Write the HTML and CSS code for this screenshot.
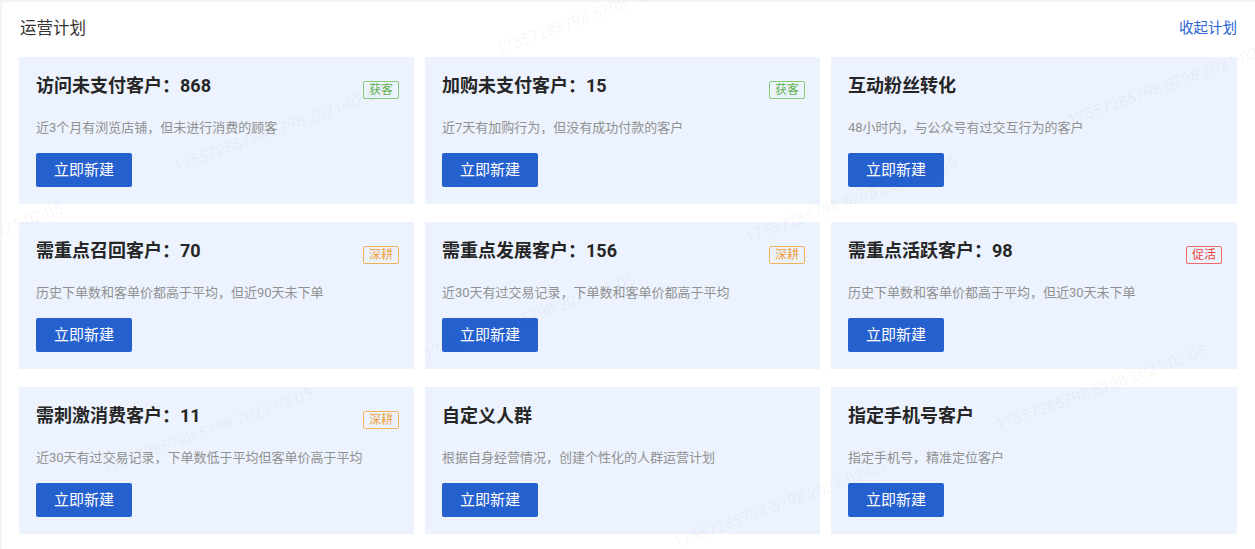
FILE: index.html
```html
<!DOCTYPE html>
<html lang="zh-CN">
<head>
    <meta charset="UTF-8">
    <meta name="viewport" content="width=device-width, initial-scale=1.0">
    <title>运营计划</title>
    <link rel="stylesheet" href="styles.css">
</head>
<body>
    <div class="panel">
        <div class="panel-head">
            <span class="panel-title">运营计划</span>
            <a class="panel-toggle" href="#">收起计划</a>
        </div>

        <div class="plan-grid">
            <div class="plan-card">
                <div class="plan-top">
                    <h3 class="plan-name">访问未支付客户：868</h3>
                    <span class="tag tag-green">获客</span>
                </div>
                <p class="plan-desc">近3个月有浏览店铺，但未进行消费的顾客</p>
                <button class="btn-primary">立即新建</button>
            </div>
            <div class="plan-card">
                <div class="plan-top">
                    <h3 class="plan-name">加购未支付客户：15</h3>
                    <span class="tag tag-green">获客</span>
                </div>
                <p class="plan-desc">近7天有加购行为，但没有成功付款的客户</p>
                <button class="btn-primary">立即新建</button>
            </div>
            <div class="plan-card">
                <div class="plan-top">
                    <h3 class="plan-name">互动粉丝转化</h3>
                </div>
                <p class="plan-desc">48小时内，与公众号有过交互行为的客户</p>
                <button class="btn-primary">立即新建</button>
            </div>

            <div class="plan-card">
                <div class="plan-top">
                    <h3 class="plan-name">需重点召回客户：70</h3>
                    <span class="tag tag-orange">深耕</span>
                </div>
                <p class="plan-desc">历史下单数和客单价都高于平均，但近90天未下单</p>
                <button class="btn-primary">立即新建</button>
            </div>
            <div class="plan-card">
                <div class="plan-top">
                    <h3 class="plan-name">需重点发展客户：156</h3>
                    <span class="tag tag-orange">深耕</span>
                </div>
                <p class="plan-desc">近30天有过交易记录，下单数和客单价都高于平均</p>
                <button class="btn-primary">立即新建</button>
            </div>
            <div class="plan-card">
                <div class="plan-top">
                    <h3 class="plan-name">需重点活跃客户：98</h3>
                    <span class="tag tag-red">促活</span>
                </div>
                <p class="plan-desc">历史下单数和客单价都高于平均，但近30天未下单</p>
                <button class="btn-primary">立即新建</button>
            </div>

            <div class="plan-card">
                <div class="plan-top">
                    <h3 class="plan-name">需刺激消费客户：11</h3>
                    <span class="tag tag-orange">深耕</span>
                </div>
                <p class="plan-desc">近30天有过交易记录，下单数低于平均但客单价高于平均</p>
                <button class="btn-primary">立即新建</button>
            </div>
            <div class="plan-card">
                <div class="plan-top">
                    <h3 class="plan-name">自定义人群</h3>
                </div>
                <p class="plan-desc">根据自身经营情况，创建个性化的人群运营计划</p>
                <button class="btn-primary">立即新建</button>
            </div>
            <div class="plan-card">
                <div class="plan-top">
                    <h3 class="plan-name">指定手机号客户</h3>
                </div>
                <p class="plan-desc">指定手机号，精准定位客户</p>
                <button class="btn-primary">立即新建</button>
            </div>
        </div>
    </div>

    <!-- 水印 -->
    <div class="watermark">
        <span class="wm wm-0">17557285798 5798 2021-02-05</span>
        <span class="wm wm-1">17557285798 5798 2021-02-05</span>
        <span class="wm wm-2">17557285798 5798 2021-02-05</span>
        <span class="wm wm-3">17557285798 5798 2021-02-05</span>
        <span class="wm wm-4">17557285798 5798 2021-02-05</span>
        <span class="wm wm-5">17557285798 5798 2021-02-05</span>
        <span class="wm wm-6">17557285798 5798 2021-02-05</span>
        <span class="wm wm-7">17557285798 5798 2021-02-05</span>
        <span class="wm wm-8">17557285798 5798 2021-02-05</span>
    </div>
</body>
</html>
```

FILE: styles.css
```css
body {
    margin: 0;
    background-color: #f3f4f6;
    font-family: Roboto, "Noto Sans CJK SC", sans-serif;
    color: #333;
    overflow: hidden;
}
.panel {
    position: relative;
    margin: 2px 0 0 2px;
    padding: 0 18px 20px 17px;
    background: #fff;
    min-height: 547px;
    box-sizing: border-box;
}
.panel-head {
    display: flex;
    justify-content: space-between;
    align-items: center;
    height: 54px;
    margin-bottom: 1px;
}
.panel-title {
    padding-left: 1px;
    font-size: 16.5px;
    line-height: 22px;
    color: #333;
}
.panel-toggle {
    font-size: 14.5px;
    line-height: 20px;
    color: #2b64d6;
    text-decoration: none;
}
.plan-grid {
    display: grid;
    grid-template-columns: 395px 395px 1fr;
    grid-auto-rows: 147px;
    column-gap: 11px;
    row-gap: 18px;
}
.plan-card {
    background: #ecf3fe;
    padding: 16px 15px 0 17px;
    box-sizing: border-box;
}
.plan-top {
    display: flex;
    justify-content: space-between;
    align-items: flex-start;
}
.plan-name {
    margin: 0;
    font-size: 18px;
    line-height: 26px;
    font-weight: 700;
    color: #262626;
}
.plan-desc {
    margin: 19px 0 0;
    font-size: 13px;
    line-height: 20px;
    color: #919191;
}
.btn-primary {
    display: block;
    margin-top: 15px;
    width: 96px;
    height: 34px;
    padding: 0;
    border: none;
    border-radius: 2px;
    background: #2560cf;
    color: #fff;
    font-family: inherit;
    font-size: 15px;
    line-height: 34px;
}
.tag {
    margin-top: 8px;
    padding: 0 5px;
    font-size: 12px;
    line-height: 16px;
    border: 1px solid;
    border-radius: 2px;
}
.tag-green {
    color: #5cb04a;
    border-color: #86cc77;
}
.tag-orange {
    color: #eea03a;
    border-color: #f0b25c;
}
.tag-red {
    color: #e8453f;
    border-color: #ef6a64;
}

.watermark {
    position: absolute;
    top: 0;
    left: 0;
    width: 1255px;
    height: 549px;
    overflow: hidden;
    pointer-events: none;
}
.wm {
    position: absolute;
    font-family: Roboto, sans-serif;
    font-size: 16px;
    line-height: 16px;
    white-space: nowrap;
    color: rgba(0, 0, 0, 0.05);
    transform: rotate(-20deg);
    transform-origin: 0 100%;
}
.wm-0 { left: 499px; top: 42px; }
.wm-1 { left: 177px; top: 159px; }
.wm-2 { left: -145px; top: 276px; }
.wm-3 { left: 1071px; top: 113px; }
.wm-4 { left: 749px; top: 230px; }
.wm-5 { left: 105px; top: 461px; }
.wm-6 { left: 427px; top: 347px; }
.wm-7 { left: 677px; top: 535px; }
.wm-8 { left: 999px; top: 418px; }
```
